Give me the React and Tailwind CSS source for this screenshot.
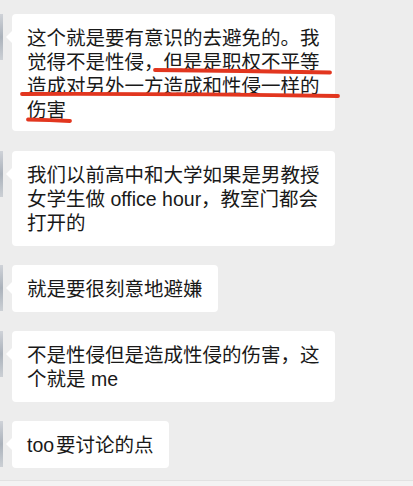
import React from "react";

function Bubble({ children, wide, overlay, first }) {
  return (
    <div className={"flex items-start " + (first ? "mb-[1px]" : "")}>
      <div className="w-[3px] h-[46px] bg-gradient-to-b from-[#c8ccd3] via-[#9aa3ae] to-[#c4c9cf] opacity-80" />
      <div
        className={
          "relative ml-[9px] bg-white rounded-[4px] px-[15px] pt-[12px] text-[19.5px] leading-[24px] text-[#191919] " +
          (first ? "pb-[9px] " : "pb-[11px] ") +
          (wide ? "w-[323px]" : "w-fit")
        }
      >
        <div className="absolute left-[-6px] top-[17px] w-0 h-0 border-y-[6px] border-y-transparent border-r-[6px] border-r-white" />
        {children}
        {overlay}
      </div>
    </div>
  );
}

export default function App() {
  const underline = (
    <svg
      className="absolute left-0 top-0 overflow-visible pointer-events-none"
      width="323"
      height="117"
    >
      <path
        d="M143 56 Q230 56.5 318 58.5"
        stroke="#e2361f"
        strokeWidth="3.8"
        strokeLinecap="round"
        fill="none"
      />
      <path
        d="M10 80 Q170 79.5 326 82"
        stroke="#e2361f"
        strokeWidth="3.8"
        strokeLinecap="round"
        fill="none"
      />
      <path
        d="M16 105.5 Q38 106 58 107"
        stroke="#e2361f"
        strokeWidth="3.8"
        strokeLinecap="round"
        fill="none"
      />
    </svg>
  );

  return (
    <div className="w-[413px] h-[486px] bg-[#ededed] overflow-hidden flex flex-col font-[family-name:'Liberation_Sans','Noto_Sans_CJK_SC',sans-serif]">
      <div className="flex flex-col gap-[19px] pt-[14px] flex-1">
        <Bubble wide first overlay={underline}>
          <div>这个就是要有意识的去避免的。我</div>
          <div>觉得不是性侵，但是是职权不平等</div>
          <div>造成对另外一方造成和性侵一样的</div>
          <div>伤害</div>
        </Bubble>
        <Bubble wide>
          <div>我们以前高中和大学如果是男教授</div>
          <div>女学生做 office hour，教室门都会</div>
          <div>打开的</div>
        </Bubble>
        <Bubble>
          <div>就是要很刻意地避嫌</div>
        </Bubble>
        <Bubble wide>
          <div>不是性侵但是造成性侵的伤害，这</div>
          <div>个就是 me</div>
        </Bubble>
        <Bubble>
          <div>
            <span className="mr-[2px]">too</span>要讨论的点
          </div>
        </Bubble>
      </div>
      <div className="h-[6px] bg-[#f3f3f3] border-t border-[#e2e2e2]" />
    </div>
  );
}
